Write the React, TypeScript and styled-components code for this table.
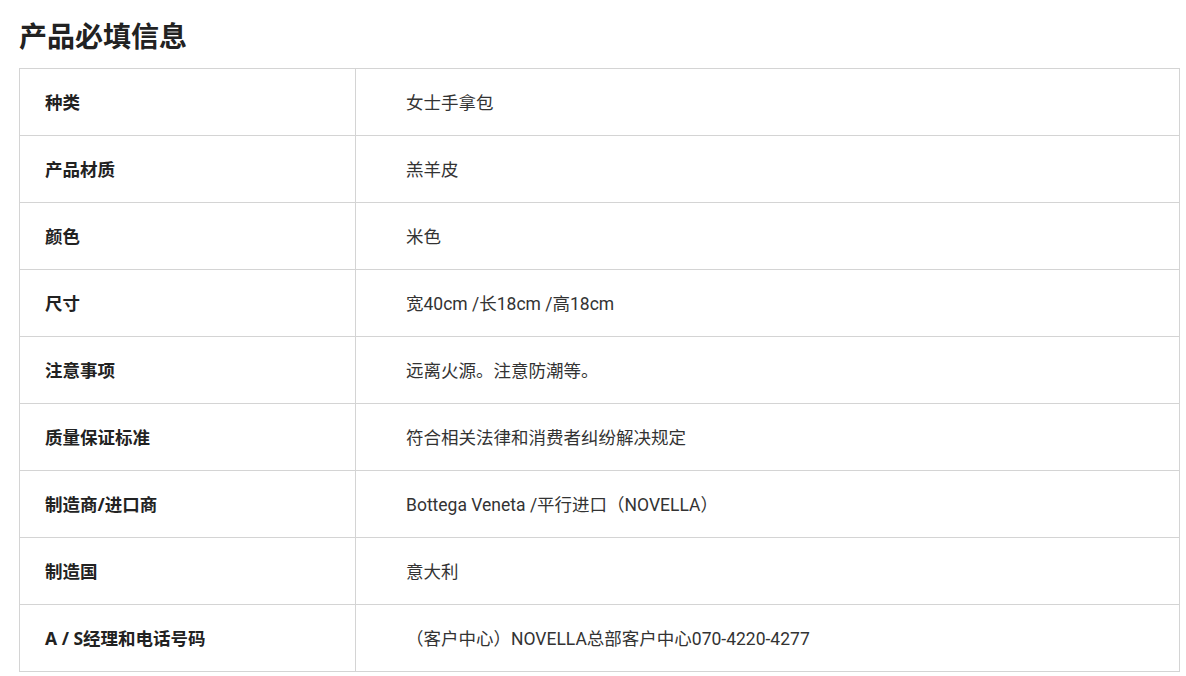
import * as React from "react";
import styled, { createGlobalStyle } from "styled-components";

const GlobalStyle = createGlobalStyle`
  html, body {
    margin: 0;
    padding: 0;
    background: #fff;
  }
  body {
    font-family: "Noto Sans", "Noto Sans CJK SC", sans-serif;
    color: #222;
  }
`;

const ROWS: [string, string][] = [
  ["种类", "女士手拿包"],
  ["产品材质", "羔羊皮"],
  ["颜色", "米色"],
  ["尺寸", "宽40cm /长18cm /高18cm"],
  ["注意事项", "远离火源。注意防潮等。"],
  ["质量保证标准", "符合相关法律和消费者纠纷解决规定"],
  ["制造商/进口商", "Bottega Veneta /平行进口（NOVELLA）"],
  ["制造国", "意大利"],
  ["A / S经理和电话号码", "（客户中心）NOVELLA总部客户中心070-4220-4277"],
];

const App = () => {
  return (
    <Page>
      <GlobalStyle />
      <Title>产品必填信息</Title>
      <Table>
        <tbody>
          {ROWS.map(([label, value]) => (
            <Row key={label}>
              <Label>{label}</Label>
              <Value>{value}</Value>
            </Row>
          ))}
        </tbody>
      </Table>
    </Page>
  );
};

export default App;

const Page = styled.div`
  padding: 15px 6px 0 19px;
`;

const Title = styled.h2`
  margin: 0 0 12px 0;
  font-family: "Noto Sans CJK SC", sans-serif;
  font-size: 28px;
  line-height: 41px;
  font-weight: 700;
  color: #222;
`;

const Table = styled.table`
  width: 100%;
  border-collapse: collapse;
  border: 1px solid #d4d4d4;
  table-layout: fixed;
`;

const Row = styled.tr`
  height: 67px;
  border-bottom: 1px solid #d4d4d4;
`;

const Label = styled.th`
  width: 336px;
  box-sizing: border-box;
  padding: 0 0 2px 25px;
  text-align: left;
  font-family: "Noto Sans", "Noto Sans CJK SC", sans-serif;
  font-size: 17.5px;
  font-weight: 700;
  color: #222;
  border-right: 1px solid #d4d4d4;
`;

const Value = styled.td`
  padding: 0 0 2px 50px;
  font-family: "Roboto", "Noto Sans CJK SC", sans-serif;
  font-size: 17.5px;
  font-weight: 400;
  color: #333;
`;
